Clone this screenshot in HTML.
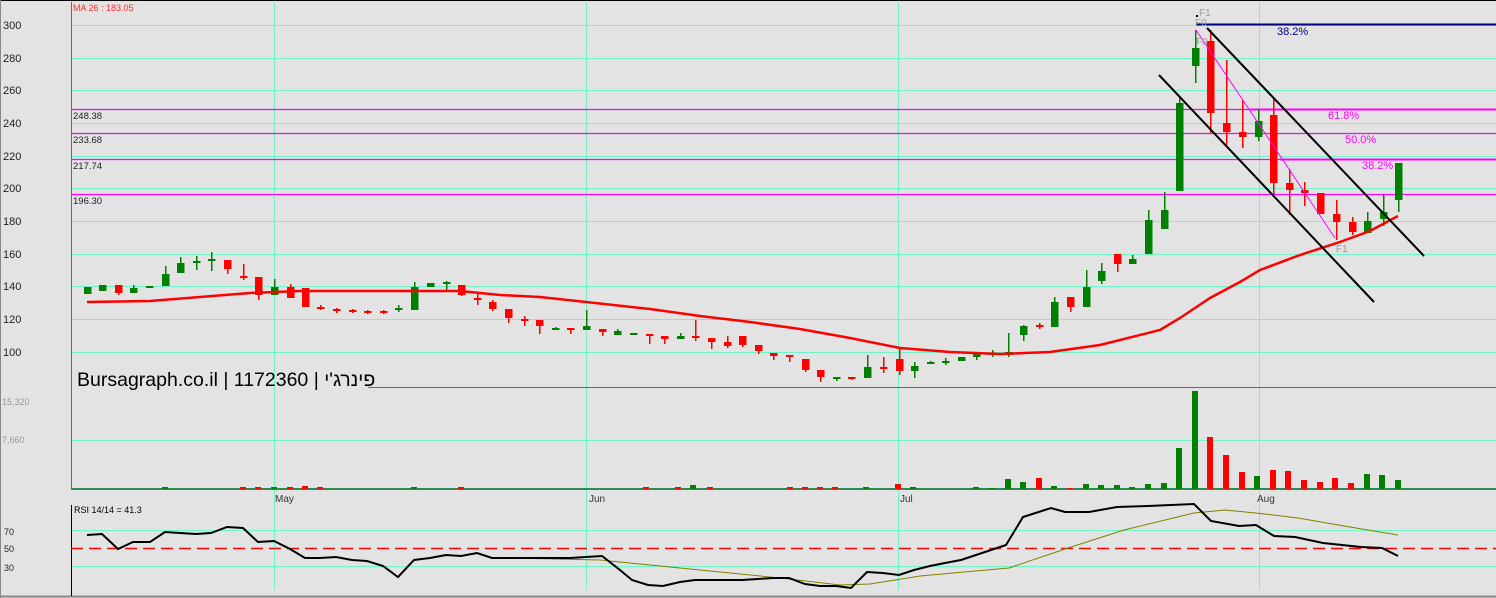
<!DOCTYPE html>
<html><head><meta charset="utf-8"><style>
html,body{margin:0;padding:0;background:#e3e3e3;}
svg{display:block;font-family:"Liberation Sans","Noto Sans CJK SC",sans-serif;}
</style></head><body>
<svg id="s" width="1496" height="598" xmlns="http://www.w3.org/2000/svg">
<rect width="1496" height="598" fill="#e3e3e3"/>
<line x1="0" y1="0.5" x2="1496" y2="0.5" stroke="#000"/>
<line x1="0.5" y1="0" x2="0.5" y2="598" stroke="#888"/>
<line x1="0" y1="596.5" x2="1496" y2="596.5" stroke="#888" stroke-width="2"/>
<g id="grid" stroke="#70f5c8" stroke-width="1"></g>
<g id="fib"></g>
<g id="ax" font-size="11" fill="#222"></g>
<line x1="71.5" y1="2" x2="71.5" y2="489" stroke="#2e8b57"/>
<line x1="71.5" y1="505" x2="71.5" y2="596" stroke="#000"/>
<line x1="368" y1="387.5" x2="1496" y2="387.5" stroke="#2e8b57"/>
<line x1="71" y1="489" x2="1496" y2="489" stroke="#2e8b57" stroke-width="2"/>
<g id="c"></g>
<g id="v"></g>
<polyline id="ma" fill="none" stroke="#ff0000" stroke-width="2.5" points="87,302 150,301 200,297 250,293 300,291 420,291 460,291 500,295 540,297 586,302 650,309 700,316 750,322 800,329 850,338 900,348 950,352 1000,354 1050,352 1100,345 1160,330 1180,318 1210,298 1240,282 1260,270 1300,255 1340,242 1370,231 1398,216"/>
<line x1="1196" y1="30" x2="1335" y2="238" stroke="#ff00ff" stroke-width="1"/>
<line x1="1207" y1="28" x2="1424" y2="256" stroke="#000" stroke-width="2"/>
<line x1="1159" y1="75" x2="1374" y2="302" stroke="#000" stroke-width="2"/>
<line x1="1196" y1="24.5" x2="1496" y2="24.5" stroke="#000080" stroke-width="2"/>
<text x="1277" y="35" font-size="11" fill="#000080">38.2%</text>
<text x="1328" y="119" font-size="11" fill="#ff00ff">61.8%</text>
<text x="1345" y="143" font-size="11" fill="#ff00ff">50.0%</text>
<text x="1362" y="169" font-size="11" fill="#ff00ff">38.2%</text>
<g font-size="10" fill="#999"><text x="1199" y="16">F1</text><text x="1195" y="26">F0</text><text x="1196" y="45">F0</text><text x="1336" y="252">F1</text></g>
<rect x="1196" y="15" width="2" height="2" fill="#000"/>
<text x="73" y="11" font-size="9" fill="#ff3030">MA 26 : 183.05</text>
<text x="77" y="386" font-size="19.5" fill="#000" style="unicode-bidi:plaintext" direction="ltr">Bursagraph.co.il | 1172360 | פינרג'י</text>
<g font-size="10" fill="#333"><text x="275" y="502">May</text><text x="589" y="502">Jun</text><text x="900" y="502">Jul</text><text x="1257" y="502">Aug</text></g>
<text x="74" y="513" font-size="9" fill="#000">RSI 14/14 = 41.3</text>
<g font-size="9" fill="#223"><text x="4" y="535">70</text><text x="4" y="552">50</text><text x="4" y="571">30</text></g>
<g font-size="9" fill="#999"><text x="2" y="405">15,320</text><text x="2" y="443">7,660</text></g>
<line x1="71" y1="548.5" x2="1496" y2="548.5" stroke="#ff0000" stroke-width="1.5" stroke-dasharray="12,6"/>
<polyline fill="none" stroke="#808000" stroke-width="1" points="510,558 600,560 700,570 780,578 840,585 870,584 920,576 1009,568 1068,548 1124,530 1194,513 1225,510 1256,513 1298,518 1350,527 1398,535"/>
<polyline fill="none" stroke="#000" stroke-width="2" points="87,535 102,534 118,549 133,542 150,542 165,532 180,533 196,534 211,533 227,527 243,528 258,542 274,541 290,549 305,558 320,558 336,557 352,560 367,561 383,566 398,577 414,560 430,558 446,555 461,556 477,553 492,558 508,558 524,558 540,558 555,558 570,558 586,557 602,556 620,570 632,580 648,585 663,586 680,582 695,580 711,580 727,580 742,580 758,579 773,578 789,578 805,584 820,586 836,586 851,588 867,572 883,573 899,575 914,570 930,566 945,563 961,560 976,555 1006,545 1023,517 1051,508 1065,512 1089,512 1117,507 1148,506 1194,504 1211,521 1239,526 1256,525 1274,536 1295,537 1323,543 1361,547 1382,548 1398,556"/>
</svg>
<script>
var NS="http://www.w3.org/2000/svg";
function el(p,t,a){var e=document.createElementNS(NS,t);for(var k in a)e.setAttribute(k,a[k]);p.appendChild(e);return e;}
var grid=document.getElementById('grid');
[25,58,90,123,156,188,221,254,286,319,352].forEach(function(y){el(grid,'line',{x1:72,y1:y+.5,x2:1496,y2:y+.5});});
[440,530,566].forEach(function(y){el(grid,'line',{x1:72,y1:y+.5,x2:1496,y2:y+.5});});
[274,586,898,1259].forEach(function(x){el(grid,'line',{x1:x+.5,y1:2,x2:x+.5,y2:590});});
var ax=document.getElementById('ax');
[300,280,260,240,220,200,180,160,140,120,100].forEach(function(p,i){var y=[25,58,90,123,156,188,221,254,286,319,352][i];var t=el(ax,'text',{x:3,y:y+4});t.textContent=p;});
var fib=document.getElementById('fib');
[[109,'248.38'],[133,'233.68'],[159,'217.74'],[194,'196.30']].forEach(function(a){el(fib,'line',{x1:72,y1:a[0]+.5,x2:1496,y2:a[0]+.5,stroke:'#ff00ff','stroke-width':1.2});var t=el(fib,'text',{x:73,y:a[0]+10,'font-size':'9.5',fill:'#222'});t.textContent=a[1];});
el(fib,'line',{x1:1250,y1:109.5,x2:1496,y2:109.5,stroke:'#ff00ff','stroke-width':2});
el(fib,'line',{x1:1280,y1:159.5,x2:1496,y2:159.5,stroke:'#ff00ff','stroke-width':2});
var G='#008000',R='#ff0000';
var C=[[87,287,294,287,294,G],[102,285,291,285,291,G],[118,285,293,285,295,R],[133,288,293,285,293,G],[149,286,288,286,288,G],[165,274,286,266,286,G],[180,263,273,257,273,G],[196,261,263,256,270,G],[211,259,261,252,271,G],[227,260,269,260,274,R],[243,276,278,264,280,R],[258,277,295,277,300,R],[274,287,295,279,295,G],[290,287,298,284,298,R],[305,288,307,288,307,R],[320,307,309,305,310,R],[336,309,311,308,313,R],[352,310,312,309,313,R],[367,311,313,310,314,R],[383,311,313,310,314,R],[398,308,310,305,312,G],[414,287,310,282,310,G],[430,283,287,283,287,G],[446,282,284,281,290,G],[461,285,295,285,296,R],[477,298,300,294,305,R],[492,302,309,300,311,R],[508,309,318,309,323,R],[524,319,321,316,326,R],[539,320,326,320,334,R],[555,328,330,327,330,G],[570,328,330,328,334,R],[586,326,330,310,330,G],[602,329,332,329,336,R],[617,331,335,329,335,G],[633,333,335,333,335,G],[649,334,336,334,344,R],[664,336,339,336,344,R],[680,336,339,333,339,G],[695,336,338,320,341,R],[711,338,342,338,349,R],[727,342,346,336,348,R],[742,336,345,336,347,R],[758,345,351,345,354,R],[773,353,356,353,360,R],[789,355,357,355,362,R],[805,359,370,359,372,R],[820,370,377,370,382,R],[836,377,379,377,381,G],[851,377,379,377,380,R],[867,367,378,355,378,G],[883,367,369,357,373,R],[899,359,371,347,375,R],[914,366,371,362,378,G],[930,362,364,361,364,G],[945,361,363,358,365,G],[961,357,361,357,361,G],[976,354,357,352,360,G],[992,353,355,350,357,G],[1008,352,355,333,357,G],[1023,326,335,325,341,G],[1039,325,327,323,329,R],[1054,302,327,297,327,G],[1070,297,307,297,312,R],[1086,287,307,270,307,G],[1101,271,281,263,284,G],[1117,254,264,254,272,R],[1132,259,264,255,264,G],[1148,220,254,210,254,G],[1164,210,229,192,229,G],[1179,103,191,98,191,G],[1195,48,66,30,83,G],[1210,41,113,30,133,R],[1226,123,132,60,145,R],[1242,132,137,100,148,R],[1258,121,137,110,141,G],[1273,115,183,98,194,R],[1289,183,190,169,215,R],[1304,190,193,182,206,R],[1320,193,214,193,214,R],[1336,214,222,200,240,R],[1352,222,232,217,235,R],[1367,221,233,212,233,G],[1383,212,219,195,226,G],[1398,163,200,163,212,G]];
var cg=document.getElementById('c');
C.forEach(function(c){el(cg,'rect',{x:c[0],y:c[3],width:1.5,height:c[4]-c[3],fill:c[5]});el(cg,'rect',{x:c[0]-3,y:c[1],width:7.5,height:Math.max(2,c[2]-c[1]),fill:c[5]});});
var V=[[165,487,G],[243,487,R],[258,487,R],[274,487,G],[290,487,R],[305,486,R],[320,487,R],[414,487,G],[461,487,R],[646,487,R],[678,487,R],[693,485,G],[710,487,R],[790,487,R],[805,487,R],[820,487,R],[835,487,R],[866,487,G],[898,484,R],[913,487,G],[976,487,G],[992,488,G],[1008,479,G],[1023,482,G],[1039,478,R],[1054,486,G],[1070,488,R],[1086,484,G],[1101,485,G],[1117,485,G],[1132,487,G],[1148,484,G],[1164,483,G],[1179,448,G],[1195,391,G],[1210,437,R],[1226,455,R],[1242,472,R],[1257,476,G],[1273,470,R],[1288,471,R],[1304,480,R],[1320,482,R],[1335,478,R],[1351,483,R],[1367,474,G],[1382,475,G],[1398,480,G]];
var vg=document.getElementById('v');
V.forEach(function(v){el(vg,'rect',{x:v[0]-3,y:v[1],width:6,height:489-v[1],fill:v[2]});});
</script>
</body></html>
